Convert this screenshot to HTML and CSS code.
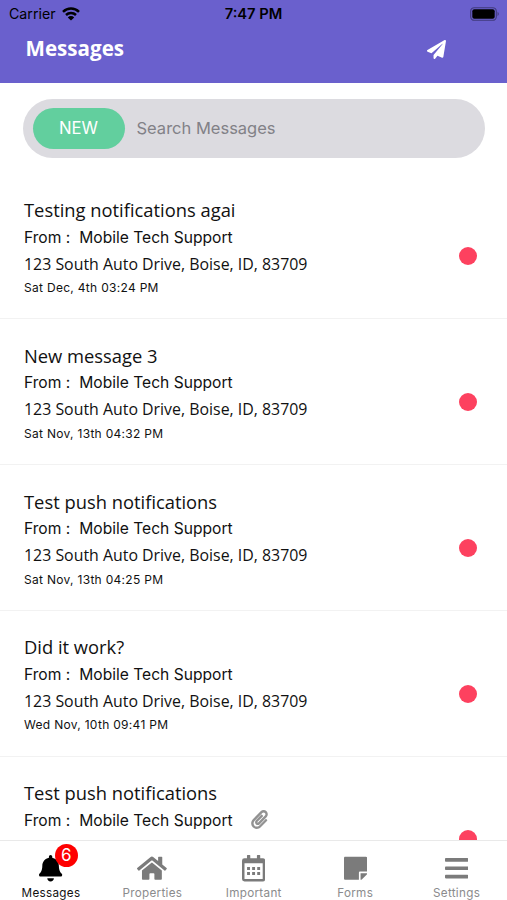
FILE: index.html
```html
<!DOCTYPE html>
<html lang="en">
<head>
    <meta charset="UTF-8">
    <meta name="viewport" content="width=device-width, initial-scale=1">
    <title>Messages</title>
    <link rel="stylesheet" href="styles.css">
</head>
<body>
    <div class="app">
        <header class="header">
            <div class="status-bar">
                <div class="status-left">
                    <span class="carrier">Carrier</span>
                    <svg class="wifi" viewBox="0 0 18 14">
                        <path d="M1 4.8a11.5 11.5 0 0 1 16 0M4 8a7.2 7.2 0 0 1 10 0" fill="none" stroke="#000" stroke-width="2.5"/>
                        <path d="M9 13.6L5.8 10.4a4.5 4.5 0 0 1 6.4 0z"/>
                    </svg>
                </div>
                <span class="clock">7:47 PM</span>
                <div class="status-right">
                    <svg class="battery" viewBox="0 0 30 14">
                        <rect x="0.7" y="0.7" width="25.6" height="12.6" rx="3.6" fill="none" stroke="#000" stroke-opacity=".4" stroke-width="1.1"/>
                        <rect x="2.3" y="2.3" width="22.4" height="9.4" rx="2"/>
                        <path d="M27.6 4.8q2.2 2.2 0 4.4z" fill-opacity=".45"/>
                    </svg>
                </div>
            </div>
            <div class="title-bar">
                <h1 class="page-title">Messages</h1>
                <svg class="send-icon" viewBox="0 0 512 512"><path d="M476 3.2L12.5 270.6c-18.1 10.4-15.8 35.6 2.2 43.2L121 358.4l287.3-253.2c5.5-4.9 13.3 2.6 8.6 8.3L176 407v80.5c0 23.6 28.5 32.9 42.5 15.8L282 426l124.6 52.2c14.2 6 30.4-2.9 33-18.2l72-432C515 7.8 493.3-6.8 476 3.2z"/></svg>
            </div>
        </header>

        <main class="content">
            <div class="search">
                <button class="new-button">NEW</button>
                <input class="search-input" type="text" placeholder="Search Messages">
            </div>

            <div class="message">
                <div class="message-body">
                    <h2 class="subject">Testing notifications agai</h2>
                    <p class="from"><span class="from-label">From :</span>Mobile Tech Support</p>
                    <p class="address">123 South Auto Drive, Boise, ID, 83709</p>
                    <p class="date">Sat Dec, 4th 03:24 PM</p>
                </div>
                <span class="unread"></span>
            </div>
            <div class="message">
                <div class="message-body">
                    <h2 class="subject">New message 3</h2>
                    <p class="from"><span class="from-label">From :</span>Mobile Tech Support</p>
                    <p class="address">123 South Auto Drive, Boise, ID, 83709</p>
                    <p class="date">Sat Nov, 13th 04:32 PM</p>
                </div>
                <span class="unread"></span>
            </div>
            <div class="message">
                <div class="message-body">
                    <h2 class="subject">Test push notifications</h2>
                    <p class="from"><span class="from-label">From :</span>Mobile Tech Support</p>
                    <p class="address">123 South Auto Drive, Boise, ID, 83709</p>
                    <p class="date">Sat Nov, 13th 04:25 PM</p>
                </div>
                <span class="unread"></span>
            </div>
            <div class="message">
                <div class="message-body">
                    <h2 class="subject">Did it work?</h2>
                    <p class="from"><span class="from-label">From :</span>Mobile Tech Support</p>
                    <p class="address">123 South Auto Drive, Boise, ID, 83709</p>
                    <p class="date">Wed Nov, 10th 09:41 PM</p>
                </div>
                <span class="unread"></span>
            </div>
            <div class="message">
                <div class="message-body">
                    <h2 class="subject">Test push notifications</h2>
                    <p class="from">
                        <span class="from-label">From :</span>Mobile Tech Support
                        <svg class="clip" viewBox="0 0 448 512"><path d="M43.246 466.142c-58.43-60.289-57.341-157.511 1.386-217.581L254.392 34c44.316-45.332 116.351-45.336 160.671 0 43.89 44.894 43.943 117.329 0 162.276L232.214 383.128c-29.855 30.537-78.633 30.111-107.982-.998-28.275-29.97-27.368-77.473 1.452-106.953l143.743-146.835c6.182-6.314 16.312-6.422 22.626-.241l22.861 22.379c6.315 6.182 6.422 16.312.241 22.626L171.427 319.927c-4.932 5.045-5.236 13.428-.648 18.292 4.372 4.634 11.245 4.711 15.688.165l182.849-186.851c19.613-20.062 19.613-52.725-.011-72.798-19.189-19.627-49.957-19.637-69.154 0L90.39 293.295c-34.763 35.56-35.299 93.12-1.191 128.313 34.01 35.093 88.985 35.137 123.058.286l172.06-175.999c6.177-6.319 16.307-6.433 22.626-.256l22.877 22.364c6.319 6.177 6.434 16.307.256 22.626l-172.06 175.998c-59.576 60.938-155.943 60.216-214.77-.485z"/></svg>
                    </p>
                </div>
                <span class="unread"></span>
            </div>
        </main>

        <nav class="tab-bar">
            <a href="#" class="tab active">
                <span class="tab-icon">
                    <svg class="icon-bell" viewBox="0 0 448 512"><path d="M224 512c35.32 0 63.97-28.65 63.97-64H160.03c0 35.35 28.65 64 63.97 64zm215.39-149.71c-19.32-20.76-55.47-51.99-55.47-154.29 0-77.7-54.48-139.9-127.94-155.16V32c0-17.67-14.32-32-31.98-32s-31.98 14.33-31.98 32v20.84C118.56 68.1 64.08 130.3 64.08 208c0 102.3-36.15 133.53-55.47 154.29-6 6.45-8.66 14.16-8.61 21.71.11 16.4 12.98 32 32.1 32h383.8c19.12 0 32-15.6 32.1-32 .05-7.55-2.61-15.27-8.61-21.71z"/></svg>
                    <span class="badge">6</span>
                </span>
                <span class="tab-label">Messages</span>
            </a>
            <a href="#" class="tab">
                <span class="tab-icon">
                    <svg class="icon-home" viewBox="0 0 576 512"><path d="M280.37 148.26L96 300.11V464a16 16 0 0 0 16 16l112.06-.29a16 16 0 0 0 15.92-16V368a16 16 0 0 1 16-16h64a16 16 0 0 1 16 16v95.64a16 16 0 0 0 16 16.05L464 480a16 16 0 0 0 16-16V300L295.67 148.26a12.19 12.19 0 0 0-15.3 0zM571.6 251.47L488 182.56V44.05a12 12 0 0 0-12-12h-56a12 12 0 0 0-12 12v72.61L318.47 43a48 48 0 0 0-61 0L4.34 251.47a12 12 0 0 0-1.6 16.9l25.5 31A12 12 0 0 0 45.15 301l235.22-193.74a12.19 12.19 0 0 1 15.3 0L530.9 301a12 12 0 0 0 16.9-1.6l25.5-31a12 12 0 0 0-1.7-16.93z"/></svg>
                </span>
                <span class="tab-label">Properties</span>
            </a>
            <a href="#" class="tab">
                <span class="tab-icon">
                    <svg class="icon-calendar" viewBox="0 0 448 512">
                        <path fill-rule="evenodd" d="M48 64h48V12a12 12 0 0 1 12-12h40a12 12 0 0 1 12 12v52h128V12a12 12 0 0 1 12-12h40a12 12 0 0 1 12 12v52h48a48 48 0 0 1 48 48v352a48 48 0 0 1-48 48H48a48 48 0 0 1-48-48V112a48 48 0 0 1 48-48zM48 160v298a6 6 0 0 0 6 6h340a6 6 0 0 0 6-6V160z"/>
                        <path d="M98 232h56v56H98zM196 232h56v56h-56zM294 232h56v56h-56zM98 328h56v56H98zM196 328h56v56h-56zM294 328h56v56h-56z"/>
                    </svg>
                </span>
                <span class="tab-label">Important</span>
            </a>
            <a href="#" class="tab">
                <span class="tab-icon">
                    <svg class="icon-note" viewBox="0 0 448 512"><path d="M312 320h136V56c0-13.3-10.7-24-24-24H24C10.700 32 0 42.700 0 56v400c0 13.300 10.700 24 24 24h264V344c0-13.200 10.800-24 24-24zm129 55l-98 98c-4.500 4.500-10.600 7-17 7h-6V352h128v6.100c0 6.300-2.500 12.400-7 16.900z"/></svg>
                </span>
                <span class="tab-label">Forms</span>
            </a>
            <a href="#" class="tab">
                <span class="tab-icon">
                    <svg class="icon-bars" viewBox="0 0 448 512"><rect y="60" width="448" height="72" rx="16"/><rect y="220" width="448" height="72" rx="16"/><rect y="380" width="448" height="72" rx="16"/></svg>
                </span>
                <span class="tab-label">Settings</span>
            </a>
        </nav>
    </div>
</body>
</html>
```
FILE: styles.css
```css
* {
    box-sizing: border-box;
}

body {
    margin: 0;
    font-family: Inter, "Liberation Sans", sans-serif;
    color: #111;
    background: #fff;
}

h1, h2, p {
    margin: 0;
    font-weight: 400;
}

.app {
    display: flex;
    flex-direction: column;
    height: 900px;
    overflow: hidden;
}

.header {
    flex: none;
    height: 82.5px;
    background: #6a60cd;
}

.status-bar {
    display: grid;
    grid-template-columns: 1fr auto 1fr;
    align-items: center;
    height: 27px;
    padding: 0 7px 0 9px;
    color: #000;
}

.status-left {
    display: flex;
    align-items: center;
    gap: 6px;
}

.carrier {
    font-size: 14.2px;
}

.wifi {
    width: 18px;
    height: 14px;
}

.clock {
    margin-right: 2px;
    font-size: 14.7px;
    font-weight: 600;
}

.status-right {
    display: flex;
    justify-content: flex-end;
}

.battery {
    width: 30px;
    height: 14px;
}

.title-bar {
    display: flex;
    justify-content: space-between;
    align-items: center;
    height: 41px;
    padding: 0 61px 0 25.5px;
}

.page-title {
    font-family: "Open Sans", sans-serif;
    font-size: 20.6px;
    font-weight: 700;
    color: #fff;
}

.send-icon {
    width: 19px;
    height: 19px;
    margin-top: 4px;
    fill: #fff;
}

.content {
    flex: 1;
    min-height: 0;
    overflow: hidden;
    padding-top: 16.5px;
}

.search {
    display: flex;
    align-items: center;
    height: 58.5px;
    margin: 0 22px 16px 23px;
    padding-left: 9.5px;
    border-radius: 30px;
    background: #dcdbe0;
}

.new-button {
    width: 92px;
    height: 40.5px;
    padding: 0;
    border: none;
    border-radius: 21px;
    background: #62cf9e;
    color: #fff;
    font-family: inherit;
    font-size: 16.7px;
}

.search-input {
    flex: 1;
    min-width: 0;
    padding: 0 0 0 12px;
    border: none;
    outline: none;
    background: none;
    font-family: inherit;
    font-size: 16.5px;
}

.search-input::placeholder {
    color: #828187;
}

.message {
    display: flex;
    justify-content: space-between;
    height: 145.75px;
    padding: 23.5px 29.7px 0 24px;
    border-bottom: 1.5px solid #f2f2f2;
}

.subject {
    font-family: "Open Sans", sans-serif;
    font-size: 18.35px;
    line-height: 25px;
    margin-bottom: 1.7px;
}

.from {
    display: flex;
    align-items: center;
    font-size: 15.6px;
    line-height: 27px;
}

.from-label {
    margin-right: 9px;
}

.clip {
    width: 17px;
    height: 19px;
    margin: -2px 0 0 18.5px;
    fill: #929292;
}

.address {
    font-family: "Open Sans", sans-serif;
    font-size: 15.9px;
    line-height: 26.5px;
}

.date {
    font-size: 12px;
    line-height: 22px;
    letter-spacing: 0.3px;
}

.unread {
    width: 18px;
    height: 18px;
    margin-top: 50.3px;
    border-radius: 50%;
    background: #fd415f;
}

.tab-bar {
    display: grid;
    grid-template-columns: repeat(5, 1fr);
    flex: none;
    height: 60px;
    border-top: 1px solid #e9e9e9;
    background: #fff;
}

.tab {
    display: flex;
    flex-direction: column;
    align-items: center;
    padding: 14px 0 0 0.5px;
    color: #8b8b8d;
    text-decoration: none;
}

.tab.active {
    color: #111;
}

.tab-icon {
    position: relative;
    display: flex;
    height: 27px;
}

.tab-icon svg {
    height: 26.5px;
    width: auto;
    fill: #7b7b7b;
}

.tab.active .icon-bell {
    fill: #000;
}

.badge {
    position: absolute;
    top: -11px;
    left: 15.5px;
    width: 23px;
    height: 23px;
    border-radius: 50%;
    background: #fe0000;
    color: #fff;
    font-size: 17px;
    line-height: 23px;
    text-align: center;
}

.tab-label {
    margin-top: 3px;
    font-size: 11.7px;
    line-height: 17px;
    letter-spacing: 0.3px;
}
```
